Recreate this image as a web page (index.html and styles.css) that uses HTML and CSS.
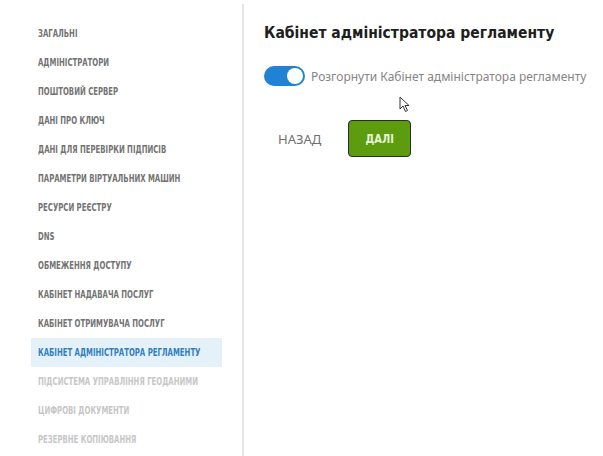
FILE: index.html
```html
<!DOCTYPE html>
<html lang="uk">
<head>
<meta charset="utf-8">
<link rel="stylesheet" href="styles.css">
</head>
<body>
<div class="app">
  <nav class="sidebar">
    <ul class="menu">
      <li class="item"><span class="txt">Загальні</span></li>
      <li class="item"><span class="txt">Адміністратори</span></li>
      <li class="item"><span class="txt">Поштовий сервер</span></li>
      <li class="item"><span class="txt">Дані про ключ</span></li>
      <li class="item"><span class="txt">Дані для перевірки підписів</span></li>
      <li class="item"><span class="txt">Параметри віртуальних машин</span></li>
      <li class="item"><span class="txt">Ресурси реєстру</span></li>
      <li class="item"><span class="txt">DNS</span></li>
      <li class="item"><span class="txt">Обмеження доступу</span></li>
      <li class="item"><span class="txt">Кабінет надавача послуг</span></li>
      <li class="item"><span class="txt">Кабінет отримувача послуг</span></li>
      <li class="item active"><span class="txt">Кабінет адміністратора регламенту</span></li>
      <li class="item disabled"><span class="txt">Підсистема управління геоданими</span></li>
      <li class="item disabled"><span class="txt">Цифрові документи</span></li>
      <li class="item disabled"><span class="txt">Резервне копіювання</span></li>
    </ul>
  </nav>
  <main class="content">
    <h1 class="title">Кабінет адміністратора регламенту</h1>
    <label class="switch-row">
      <span class="switch"><span class="knob"></span></span>
      <span class="switch-label">Розгорнути Кабінет адміністратора регламенту</span>
    </label>
    <div class="actions">
      <button class="btn-back">НАЗАД</button>
      <button class="btn-next"><span class="btn-txt">ДАЛІ</span></button>
    </div>
    <svg class="cursor" width="12" height="18" viewBox="0 0 12 18">
      <path d="M1 1 L1 13 L4 10 L6.5 15.5 L8.5 14.5 L6 9.5 L10 9.5 Z" fill="#fff" stroke="#333" stroke-width="1"/>
    </svg>
  </main>
</div>
</body>
</html>
```

FILE: styles.css
```css
* { box-sizing: border-box; }
html, body { margin: 0; padding: 0; background: #fff; }
body { width: 603px; height: 456px; overflow: hidden; }

.app {
  display: flex;
  height: 456px;
}

.sidebar {
  width: 244px;
  flex: none;
  padding-top: 19px;
  position: relative;
}
.sidebar::after {
  content: "";
  position: absolute;
  right: 0;
  top: 4px;
  bottom: 0;
  width: 2px;
  background: #e6e6e6;
}

.menu {
  list-style: none;
  margin: 0 0 0 31px;
  padding: 0;
  width: 191px;
}

.item {
  height: 29px;
  line-height: 29px;
  padding-left: 7px;
  font-family: "DejaVu Sans Condensed", sans-serif;
  font-stretch: condensed;
  font-weight: bold;
  font-size: 10px;
  text-transform: uppercase;
  color: #737373;
  white-space: nowrap;
}
.txt {
  display: inline-block;
  transform: scaleX(0.77);
  transform-origin: left center;
}
.item.active {
  background: #e4f1f9;
  color: #2f7fc1;
}
.item.disabled {
  color: #c6c6c6;
}

.content {
  flex: 1;
  position: relative;
  padding: 18px 0 0 20px;
}

.title {
  margin: 0;
  font-family: "DejaVu Sans Condensed", sans-serif;
  font-stretch: condensed;
  font-weight: bold;
  font-size: 15.5px;
  line-height: 30px;
  color: #1e1e1e;
  white-space: nowrap;
}

.switch-row {
  display: flex;
  align-items: center;
  gap: 6px;
  margin-top: 18px;
}
.switch {
  width: 41px;
  height: 20px;
  border-radius: 10px;
  background: #1f82d2;
  position: relative;
  flex: none;
}
.knob {
  position: absolute;
  right: 2px;
  top: 2px;
  width: 16px;
  height: 16px;
  border-radius: 50%;
  background: #fff;
}
.switch-label {
  font-family: "Noto Sans", sans-serif;
  font-size: 12px;
  color: #858585;
  white-space: nowrap;
}

.actions {
  display: flex;
  align-items: center;
  margin-top: 34px;
  padding-left: 14px;
  gap: 27px;
}
.btn-back {
  border: 0;
  background: none;
  padding: 0;
  font-family: "Noto Sans", sans-serif;
  font-size: 13px;
  color: #707070;
}
.btn-next {
  width: 63px;
  height: 37px;
  border: 1.5px solid #2c2c2c;
  border-radius: 4px;
  background: #5c9c0e;
  color: #e6f3d6;
  font-family: "DejaVu Sans Condensed", sans-serif;
  font-stretch: condensed;
  font-weight: bold;
  font-size: 13px;
  padding: 0;
}
.btn-txt {
  display: inline-block;
  transform: scaleX(0.85);
}

.cursor {
  position: absolute;
  left: 155px;
  top: 96px;
}
```
